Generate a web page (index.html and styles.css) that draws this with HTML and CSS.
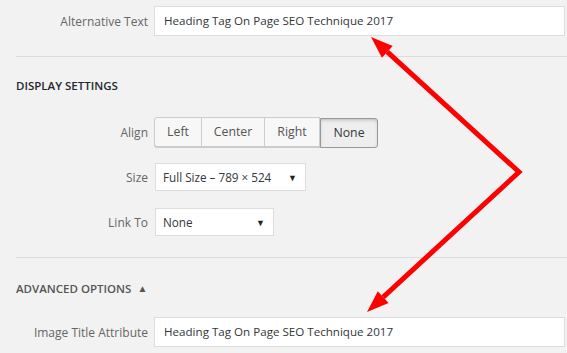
FILE: index.html
```html
<!DOCTYPE html>
<html>
<head>
    <title>Attachment Details</title>
    <link rel="stylesheet" href="styles.css">
</head>
<body>
    <div class="settings">
        <div class="row">
            <span class="name">Alternative Text</span>
            <div class="field">Heading Tag On Page SEO Technique 2017</div>
        </div>

        <div class="divider first"></div>
        <h2 class="heading display">DISPLAY SETTINGS</h2>

        <div class="row align-row">
            <span class="name">Align</span>
            <div class="button-group">
                <span class="button">Left</span>
                <span class="button">Center</span>
                <span class="button">Right</span>
                <span class="button active">None</span>
            </div>
        </div>

        <div class="row size-row">
            <span class="name">Size</span>
            <div class="select size-select">
                <span>Full Size &ndash; 789 &times; 524</span>
                <span class="caret">&#9660;</span>
            </div>
        </div>

        <div class="row link-row">
            <span class="name">Link To</span>
            <div class="select link-select">
                <span>None</span>
                <span class="caret">&#9660;</span>
            </div>
        </div>

        <div class="divider second"></div>
        <h2 class="heading advanced">ADVANCED OPTIONS <span class="toggle">&#9650;</span></h2>

        <div class="row title-row">
            <span class="name">Image Title Attribute</span>
            <div class="field">Heading Tag On Page SEO Technique 2017</div>
        </div>

        <!-- red annotation arrows drawn over the form -->
        <svg class="arrows" width="567" height="353" viewBox="0 0 567 353">
            <polyline points="387.3,51.8 519,172 383.2,297.1" fill="none" stroke="#ff0000" stroke-width="5" stroke-linejoin="miter"/>
            <polygon points="371,37 392.7,45.9 381.9,57.7" fill="#ff0000"/>
            <polygon points="367,312 388.6,303 377.8,291.2" fill="#ff0000"/>
        </svg>
    </div>
</body>
</html>
```

FILE: styles.css
```css
body {
    margin: 0;
    background: #f2f2f2;
    font-family: "Open Sans", "Noto Sans", sans-serif;
    font-size: 12px;
    color: #32373c;
}

.settings {
    position: relative;
    padding: 6px 2px 0 16px;
}

.row {
    display: grid;
    grid-template-columns: 132px 1fr;
    column-gap: 6px;
    align-items: center;
}

.name {
    text-align: right;
    color: #666;
    font-size: 12px;
}

.field {
    height: 28px;
    line-height: 28px;
    padding: 0 9px;
    background: #fff;
    border: 1px solid #ddd;
    font-size: 11.6px;
    white-space: nowrap;
}

.divider {
    height: 1px;
    background: #ddd;
    margin-right: -2px;
}

.divider.first {
    margin-top: 20px;
}

.divider.second {
    margin-top: 21px;
}

.heading {
    margin: 19px 0 0;
    height: 20px;
    line-height: 20px;
    font-size: 11.5px;
    font-weight: 600;
    color: #23282d;
}

.heading.advanced {
    margin-top: 20px;
    color: #555;
}

.toggle {
    font-size: 10px;
    margin-left: 3px;
    vertical-align: 1px;
}

.align-row {
    margin-top: 21px;
}

.button-group {
    display: flex;
}

.button {
    width: 46px;
    height: 28px;
    line-height: 28px;
    text-align: center;
    background: #f7f7f7;
    border: 1px solid #ccc;
    border-left: none;
    box-shadow: 0 1px 0 #ccc;
    color: #555;
    font-size: 12.3px;
}

.button:first-child {
    border-left: 1px solid #ccc;
    border-radius: 3px 0 0 3px;
}

.button:nth-child(2) {
    width: 62px;
}

.button:nth-child(3) {
    width: 54px;
}

.button.active {
    width: 56px;
    background: #eee;
    border: 1px solid #999;
    border-radius: 0 3px 3px 0;
    box-shadow: inset 0 2px 5px -3px rgba(0, 0, 0, 0.5);
    color: #32373c;
    margin-top: 1px;
}

.select {
    display: flex;
    justify-content: space-between;
    align-items: center;
    height: 26px;
    padding: 0 8px 0 7px;
    background: #fff;
    border: 1px solid #ddd;
    font-size: 11.7px;
    margin-left: 1px;
}

.caret {
    font-size: 9px;
    color: #222;
}

.size-row {
    margin-top: 15px;
}

.size-select {
    width: 134px;
}

.link-row {
    margin-top: 17px;
}

.link-select {
    width: 102px;
}

.title-row {
    margin-top: 19px;
}

.arrows {
    position: absolute;
    top: 0;
    left: 0;
}
```
